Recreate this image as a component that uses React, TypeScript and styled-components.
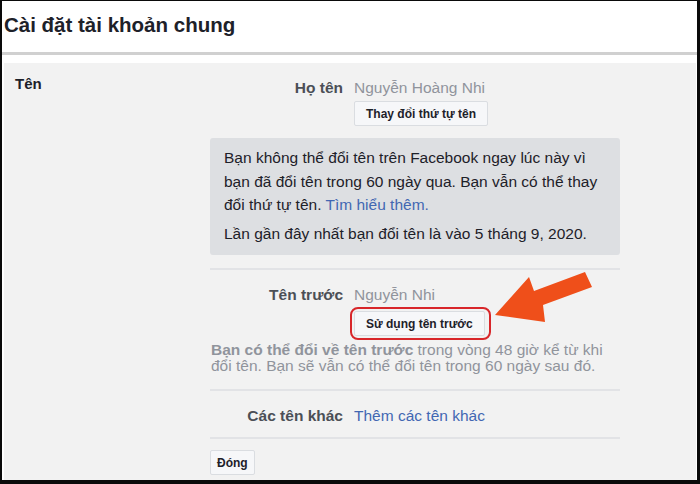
import styled, { createGlobalStyle } from "styled-components";

const GlobalStyle = createGlobalStyle`
  html, body {
    margin: 0;
    padding: 0;
    background: #000;
  }
  body {
    font-family: "Liberation Sans", Arial, sans-serif;
  }
`;

export default function App() {
  return (
    <>
      <GlobalStyle />
      <Frame>
        <Header>
          <Title>Cài đặt tài khoản chung</Title>
        </Header>
        <Section>
          <SectionLabel>Tên</SectionLabel>
          <Body>
            <Row>
              <Label>Họ tên</Label>
              <Value>Nguyễn Hoàng Nhi</Value>
            </Row>
            <Indented>
              <Button>Thay đổi thứ tự tên</Button>
            </Indented>
            <InfoBox>
              <p>
                Bạn không thể đổi tên trên Facebook ngay lúc này vì bạn đã đổi
                tên trong 60 ngày qua. Bạn vẫn có thể thay đổi thứ tự tên.{" "}
                <Link href="#">Tìm hiểu thêm.</Link>
              </p>
              <p>Lần gần đây nhất bạn đổi tên là vào 5 tháng 9, 2020.</p>
            </InfoBox>
            <Line />
            <Row $top={16}>
              <Label>Tên trước</Label>
              <Value>Nguyễn Nhi</Value>
            </Row>
            <Indented>
              <Highlight>
                <Button>Sử dụng tên trước</Button>
              </Highlight>
            </Indented>
            <Note>
              <strong>Bạn có thể đổi về tên trước</strong> trong vòng 48 giờ kể
              từ khi đổi tên. Bạn sẽ vẫn có thể đổi tên trong 60 ngày sau đó.
            </Note>
            <Line $top={15} />
            <Row $top={16}>
              <Label>Các tên khác</Label>
              <Link href="#">Thêm các tên khác</Link>
            </Row>
            <Line $top={12} />
            <Footer>
              <Button>Đóng</Button>
            </Footer>
          </Body>
          <Arrow viewBox="0 0 100 52">
            <polygon
              points="0,45 34,7 39,21 90,2 97,17 48,35 50,52"
              fill="#ef4f1a"
            />
          </Arrow>
        </Section>
      </Frame>
    </>
  );
}

const Frame = styled.div`
  width: 700px;
  height: 484px;
  box-sizing: border-box;
  border-style: solid;
  border-color: #0a0a0a;
  border-width: 1px 3px 4px 2px;
  background: #fff;
  overflow: hidden;
  display: flex;
  flex-direction: column;
`;

const Header = styled.div`
  flex-shrink: 0;
  height: 51px;
  border-bottom: 3px solid #d0d0d0;
  display: flex;
  align-items: center;
  padding-left: 2px;
`;

const Title = styled.h1`
  margin: 0 0 4px;
  font-size: 20.5px;
  font-weight: bold;
  color: #1d2129;
`;

const Section = styled.div`
  position: relative;
  flex: 1;
  min-height: 0;
  margin: 8px 1px 0 2px;
  background: #f2f2f2;
  display: flex;
`;

const SectionLabel = styled.div`
  width: 195px;
  padding: 12px 0 0 11px;
  font-size: 15px;
  font-weight: bold;
  color: #1d2129;
`;

const Body = styled.div`
  width: 410px;
  display: flex;
  flex-direction: column;

  > * {
    flex-shrink: 0;
  }
`;

const Row = styled.div<{ $top?: number }>`
  display: flex;
  align-items: baseline;
  gap: 11px;
  margin-top: ${(p) => p.$top ?? 16}px;
  font-size: 15.5px;
  line-height: 18px;
`;

const Label = styled.span`
  width: 133px;
  text-align: right;
  font-weight: bold;
  color: #4b4f56;
`;

const Value = styled.span`
  color: #90949c;
`;

const Indented = styled.div`
  padding-left: 144px;
  margin-top: 4px;
  display: flex;
`;

const Button = styled.button`
  height: 25px;
  padding: 0 11px;
  font-family: inherit;
  font-size: 12px;
  font-weight: bold;
  color: #1d2129;
  background: #f6f7f9;
  border: 1px solid #dadde1;
  border-radius: 2px;
`;

const Highlight = styled.div`
  margin-left: -4px;
  margin-top: -1px;
  padding: 2px 4px 2px 2px;
  border: 2px solid #d8262a;
  border-radius: 8px;
  display: flex;
`;

const InfoBox = styled.div`
  margin-top: 12px;
  padding: 8px 14px 10px;
  background: #dddfe2;
  border-radius: 3px;
  font-size: 15.5px;
  line-height: 23.5px;
  color: #1d2129;

  p {
    margin: 0;
  }
  p + p {
    margin-top: 5px;
  }
`;

const Link = styled.a`
  color: #4267b2;
  text-decoration: none;
`;

const Line = styled.div<{ $top?: number }>`
  height: 2px;
  background: #e2e3e6;
  margin-top: ${(p) => p.$top ?? 13}px;
`;

const Note = styled.p`
  margin: 2px 0 0 1px;
  font-size: 15.5px;
  line-height: 16px;
  color: #90949c;

  strong {
    color: #90949c;
  }
`;

const Footer = styled.div`
  margin-top: 11px;
  display: flex;

  button {
    padding: 0 6px;
  }
`;

const Arrow = styled.svg`
  position: absolute;
  left: 491px;
  top: 207px;
  width: 100px;
  height: 52px;
`;
